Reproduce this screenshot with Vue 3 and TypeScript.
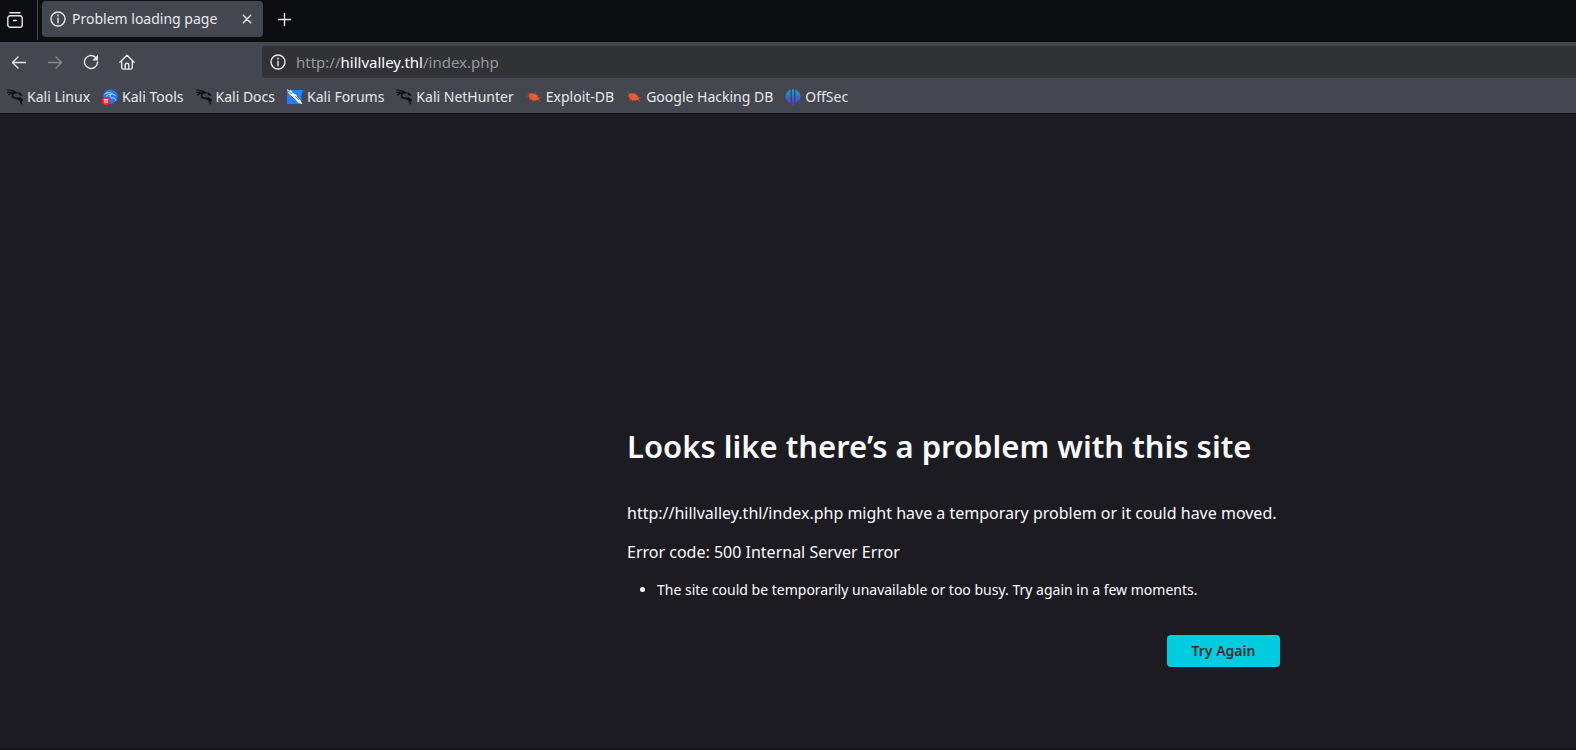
<script setup lang="ts">
type BookmarkIcon = 'dragon' | 'tools' | 'forums' | 'bug' | 'offsec'

interface Bookmark {
  label: string
  icon: BookmarkIcon
}

const bookmarks: Bookmark[] = [
  { label: 'Kali Linux', icon: 'dragon' },
  { label: 'Kali Tools', icon: 'tools' },
  { label: 'Kali Docs', icon: 'dragon' },
  { label: 'Kali Forums', icon: 'forums' },
  { label: 'Kali NetHunter', icon: 'dragon' },
  { label: 'Exploit-DB', icon: 'bug' },
  { label: 'Google Hacking DB', icon: 'bug' },
  { label: 'OffSec', icon: 'offsec' },
]

const url = { scheme: 'http://', host: 'hillvalley.thl', path: '/index.php' }
</script>

<template>
  <div class="browser">
    <header>
      <div class="tab-strip">
        <button class="icon-button view" type="button" aria-label="Recent tabs">
          <svg viewBox="0 0 16 16" class="line"><path d="M3 .8h10M3 3.800h10a2.200 2.200 0 0 1 2.200 2.200v7a2.200 2.200 0 0 1-2.200 2.200H3A2.200 2.200 0 0 1 .8 13V6A2.200 2.200 0 0 1 3 3.800zM6.500 8.500h3" /></svg>
        </button>
        <div class="tab">
          <svg viewBox="0 0 16 16" class="line"><circle cx="8" cy="8" r="7" /><path d="M8 7.200v4.600M8 4v1" /></svg>
          <span class="tab-title">Problem loading page</span>
          <button class="close" type="button" aria-label="Close tab">
            <svg viewBox="0 0 10 10" class="line"><path d="M1.300 1.300l7.400 7.400M8.700 1.300L1.300 8.700" /></svg>
          </button>
        </div>
        <button class="icon-button add" type="button" aria-label="New tab">
          <svg viewBox="0 0 16 16" class="line"><path d="M8.500 2.500v12M2.500 8.500h12" /></svg>
        </button>
      </div>

      <div class="nav-bar">
        <nav class="nav-buttons" aria-label="Navigation">
          <button class="icon-button" type="button" aria-label="Back">
            <svg viewBox="0 0 16 16" class="line"><path d="M14.500 8.500H1.800M7 3L1.500 8.500L7 14" /></svg>
          </button>
          <button class="icon-button" type="button" aria-label="Forward" disabled>
            <svg viewBox="0 0 16 16" class="line"><path d="M1.500 8.500h12.700M9 3l5.500 5.500L9 14" /></svg>
          </button>
          <button class="icon-button" type="button" aria-label="Reload">
            <svg viewBox="0 0 16 16" class="line"><path d="M12.400 3.200A6.500 6.500 0 1 0 14.500 8" /><path class="solid" d="M15 .8v5.700H9.300z" /></svg>
          </button>
          <button class="icon-button" type="button" aria-label="Home">
            <svg viewBox="0 0 16 16" class="line"><path d="M.9 8.300L8 1.200l7.100 7.100M2.700 6.800v6.700c0 .9.700 1.600 1.600 1.600h7.400c.9 0 1.600-.7 1.600-1.600V6.800M6.200 15V11a1.800 1.800 0 0 1 3.600 0v4" /></svg>
          </button>
        </nav>
        <div class="address">
          <svg viewBox="0 0 16 16" class="line"><circle cx="8" cy="8" r="7" /><path d="M8 7.200v4.600M8 4v1" /></svg>
          <span class="url">{{ url.scheme }}<b>{{ url.host }}</b>{{ url.path }}</span>
        </div>
      </div>

      <nav class="bookmarks" aria-label="Bookmarks">
        <a v-for="item in bookmarks" :key="item.label" href="#">
          <svg v-if="item.icon === 'dragon'" viewBox="0 0 16 16" class="dragon">
            <path d="M.3 1.200C4 .5 7 1.500 9.500 3.800L12.500 4l2 2-2.500-.3M0 3.600C3 2.800 6 2.800 9.600 4.300M1.200 6C3.500 4.200 5.500 4 7.400 4.300" />
            <path class="body" d="M7.500 4C4.600 5.500 4.600 8.600 8 9.100c4.200.4 6.300 2 6.600 6.200M10 9.300c2.200-.4 4.200.2 5.600 2.400" />
          </svg>
          <svg v-else-if="item.icon === 'tools'" viewBox="0 0 16 16">
            <circle cx="8.500" cy="7.500" r="7.200" fill="#2777ff" />
            <path d="M2.500 5C6 3 9 3.600 11 5.300l2.500 1M4 7.500C6.500 5 8 5 9.500 5.500C7 6.500 8 8.700 10 8.800c2.500 0 3.500 1 4 3" fill="none" stroke="#c2d9ff" stroke-width="1" />
            <circle cx="4" cy="12" r="4" fill="#f5222d" />
            <path d="M1.800 10.500h4.400M3 10.800v3.400M5 10.800v3.400" fill="none" stroke="#fff" stroke-width="1" />
          </svg>
          <svg v-else-if="item.icon === 'forums'" viewBox="0 0 16 16">
            <path d="M1 1h15l-1.500 5v9H0V5z" fill="#2480ff" />
            <path d="M0 0l3 2 .5-1.500 2.500 3.500 3 1.500 2 3.500 2 2 2.500 4-4-1-4-4.500L3.500 7 1 3.500z" fill="#f5f7f8" />
            <path d="M1 2l4 3M3 6l4 4M8 7l4 4" stroke="#24354c" stroke-width=".6" />
          </svg>
          <svg v-else-if="item.icon === 'bug'" viewBox="0 0 16 16">
            <path d="M2.500 5.500C5 3.200 9 4 11 6.500l1.800 2 .7 3-2.500-.4C8 13 4.500 11 2.800 8z" fill="#f15a29" />
            <path d="M1.500 3.500l3 2M.5 7l4 .4M3 11l3-1.500M6 13l2-2.500M9 3l1 3M13 6l-2 1.500M12 8.500l3 .2M12 10l2 3" fill="none" stroke="#a74e35" stroke-width=".8" />
          </svg>
          <svg v-else viewBox="0 0 16 16">
            <defs>
              <linearGradient id="offsec-fill" x1="0" y1="0" x2="0" y2="1">
                <stop offset="0" stop-color="#0caacb" /><stop offset="1" stop-color="#6429d8" />
              </linearGradient>
            </defs>
            <path d="M5.500.8v13.400C2.500 13 .5 10.600.5 7.500S2.500 2 5.500.8zM7 .5h2V16H7zM10.500.8c3 1.200 5 3.600 5 6.700s-2 5.500-5 6.700z" fill="url(#offsec-fill)" />
          </svg>
          <span>{{ item.label }}</span>
        </a>
      </nav>
    </header>

    <main>
      <section class="error">
        <h1>Looks like there’s a problem with this site</h1>
        <p>{{ url.scheme }}{{ url.host }}{{ url.path }} might have a temporary problem or it could have moved.</p>
        <p>Error code: 500 Internal Server Error</p>
        <ul>
          <li>The site could be temporarily unavailable or too busy. Try again in a few moments.</li>
        </ul>
        <button class="retry" type="button">Try Again</button>
      </section>
    </main>
  </div>
</template>

<style>
body {
  margin: 0;
  background: #1c1b22;
}
</style>

<style scoped>
.browser {
  display: flex;
  flex-direction: column;
  min-height: 100vh;
  box-sizing: border-box;
  border-bottom: 2px solid #1b131c;
  overflow: hidden;
  background: #1c1b22;
  color: #fbfbfe;
  font-family: "Noto Sans", sans-serif;
  font-size: 14px;
  line-height: 20px;
}

svg {
  display: block;
  flex: none;
  width: 16px;
  height: 16px;
}

.line {
  fill: none;
  stroke: currentColor;
  stroke-width: 1.4;
  stroke-linecap: round;
  stroke-linejoin: round;
}

.solid {
  fill: currentColor;
  stroke: none;
}

button {
  border: 0;
  padding: 0;
  background: none;
  color: inherit;
  font: inherit;
}

header {
  background: #44474f;
  border-bottom: 1px solid #0c0d10;
  color: #e8e8ec;
}

.tab-strip {
  display: flex;
  height: 42px;
  background: #0d0e12;
}

.icon-button {
  display: flex;
  align-items: center;
  justify-content: center;
}

.view {
  box-sizing: border-box;
  width: 38px;
  height: 40px;
  padding-right: 7px;
  border-right: 1px solid #4a4b50;
}

.tab {
  display: flex;
  align-items: center;
  box-sizing: border-box;
  width: 221px;
  height: 36px;
  margin: 1px 4px;
  padding: 0 8px;
  gap: 6px;
  border-radius: 4px;
  background: #44474f;
}

.tab-title {
  flex: 1;
  white-space: nowrap;
}

.close {
  padding: 3px;
}

.close svg {
  width: 10px;
  height: 10px;
}

.add {
  width: 34px;
  height: 38px;
}

.nav-bar {
  display: flex;
  align-items: center;
  height: 40px;
}

.nav-buttons {
  display: flex;
  width: 262px;
  padding-left: 1px;
  box-sizing: border-box;
}

.nav-buttons .icon-button {
  width: 36px;
  height: 36px;
}

.icon-button:disabled {
  color: #83858b;
}

.address {
  flex: 1;
  display: flex;
  align-items: center;
  gap: 10px;
  height: 32px;
  padding-left: 8px;
  border-radius: 4px 0 0 4px;
  background: #313236;
}

.url {
  color: #96979b;
  font-size: 15px;
}

.url b {
  color: #fbfbfe;
  font-weight: 400;
}

.bookmarks {
  display: flex;
  gap: 12px;
  height: 30px;
  padding: 0 0 1px 7px;
}

.bookmarks a {
  display: flex;
  align-items: center;
  gap: 4px;
  color: inherit;
  text-decoration: none;
  white-space: nowrap;
}

.dragon {
  fill: none;
  stroke: #0d0e10;
  stroke-width: 1.2;
}

.dragon .body {
  stroke-width: 1.7;
}

.error {
  display: flex;
  flex-direction: column;
  width: 653px;
  margin: 312px 0 0 627px;
}

h1 {
  margin: 0 0 35px;
  font-size: 31px;
  line-height: 40px;
  font-weight: 600;
  white-space: nowrap;
}

p {
  margin: 0 0 15px;
  font-size: 16px;
  line-height: 24px;
  white-space: nowrap;
}

ul {
  margin: 0;
  padding-left: 30px;
  line-height: 22px;
}

.retry {
  align-self: flex-end;
  width: 113px;
  height: 32px;
  margin-top: 34px;
  border-radius: 4px;
  background: #00ccdf;
  color: #2b2a33;
  font-weight: 600;
}
</style>
